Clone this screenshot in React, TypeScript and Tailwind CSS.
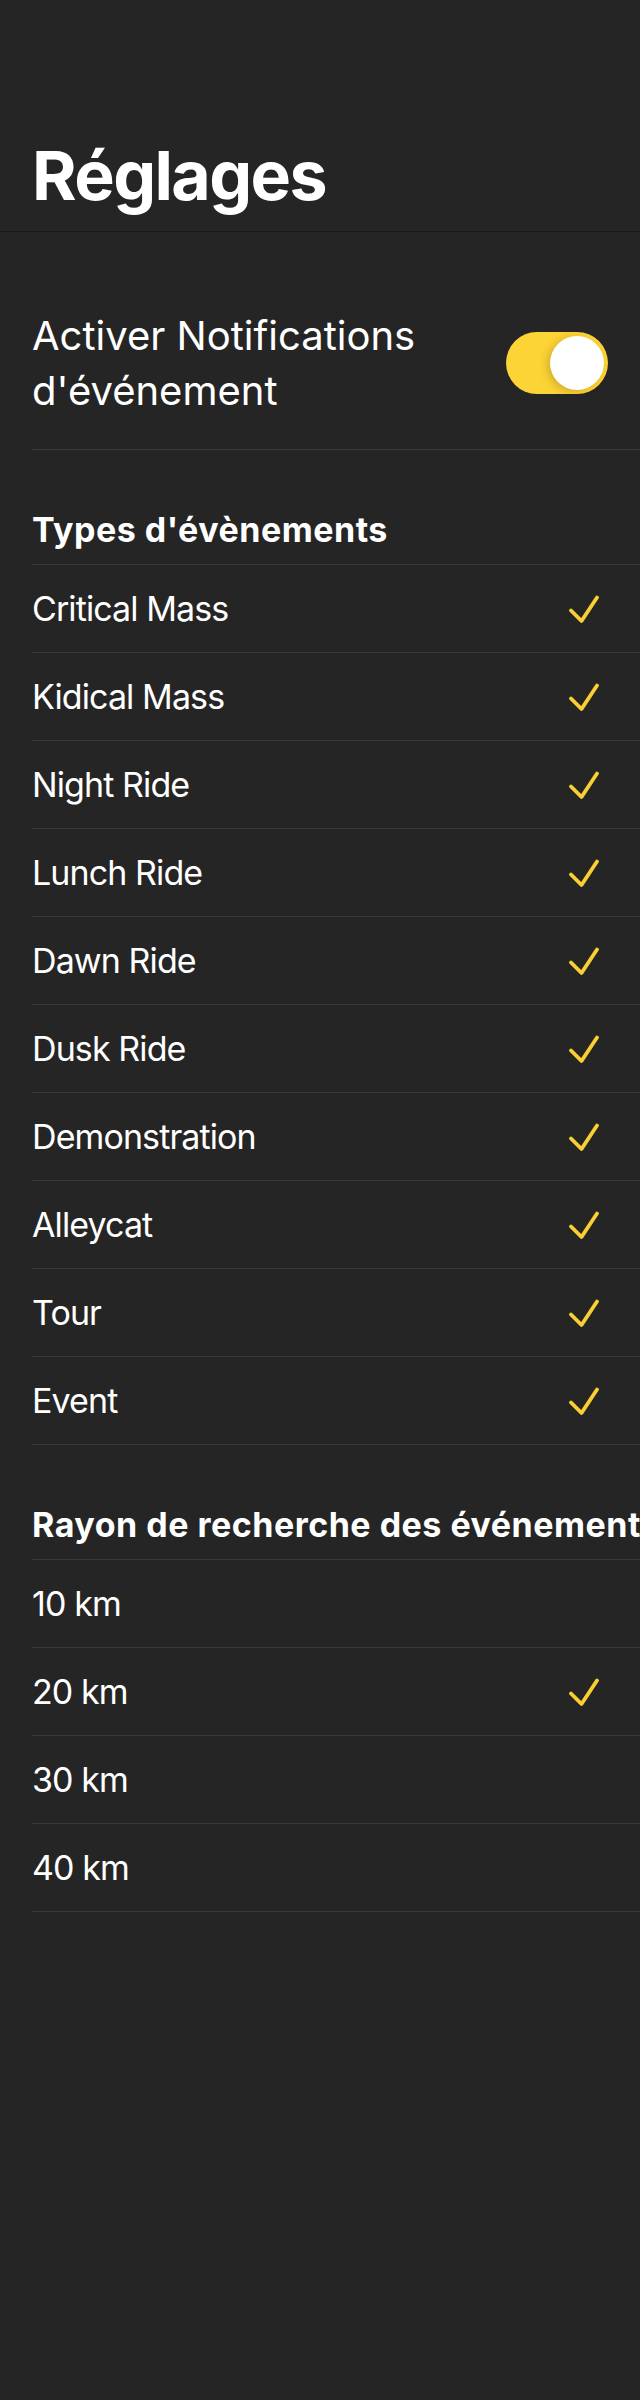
import React from "react";

const types = [
  "Critical Mass",
  "Kidical Mass",
  "Night Ride",
  "Lunch Ride",
  "Dawn Ride",
  "Dusk Ride",
  "Demonstration",
  "Alleycat",
  "Tour",
  "Event",
];

const radii = [
  { label: "10 km", checked: false },
  { label: "20 km", checked: true },
  { label: "30 km", checked: false },
  { label: "40 km", checked: false },
];

function Check() {
  return (
    <svg width="30" height="30" viewBox="0 0 30 30" fill="none" className="shrink-0">
      <path
        d="M2 16.5 L12.5 27 L28 3.5"
        stroke="#f9cf31"
        strokeWidth="3.8"
        strokeLinecap="round"
        strokeLinejoin="round"
      />
    </svg>
  );
}

function Row({ label, checked }: { label: string; checked: boolean }) {
  return (
    <div className="h-[88px] flex items-center justify-between pr-[41px] border-b border-[#3a3a3a]">
      <span className="text-[34px] leading-[41px] font-normal tracking-[-0.9px]">{label}</span>
      {checked && <Check />}
    </div>
  );
}

function SectionHeader({ title }: { title: string }) {
  return (
    <div className="pt-[59px] pb-[14px] border-b border-[#3a3a3a] whitespace-nowrap overflow-hidden">
      <span className="text-[34px] leading-[41px] font-bold tracking-[0.5px]">{title}</span>
    </div>
  );
}

export default function App() {
  return (
    <div className="min-h-[2400px] w-full bg-[#252525] text-white font-['Inter','Noto_Sans',sans-serif] overflow-hidden">
      <header className="pt-[134px] pb-[15px] px-[32px] border-b border-[#1a1a1a]">
        <h1 className="text-[68px] leading-[82px] font-bold tracking-[-1.6px]">Réglages</h1>
      </header>

      <div className="pl-[32px]">
        <div className="pt-[76px] pb-[31px] pr-[32px] flex items-center justify-between border-b border-[#3a3a3a]">
          <div className="text-[40px] leading-[55px] font-normal">
            Activer Notifications
            <br />
            d'événement
          </div>
          <div className="relative w-[102px] h-[62px] rounded-full bg-[#fdd435] shrink-0">
            <div className="absolute right-[4px] top-[4px] w-[54px] h-[54px] rounded-full bg-white shadow-[-3px_2px_8px_rgba(0,0,0,0.18)]" />
          </div>
        </div>

        <SectionHeader title="Types d'évènements" />
        {types.map((t) => (
          <Row key={t} label={t} checked={true} />
        ))}

        <SectionHeader title="Rayon de recherche des événements" />
        {radii.map((r) => (
          <Row key={r.label} label={r.label} checked={r.checked} />
        ))}
      </div>
    </div>
  );
}
